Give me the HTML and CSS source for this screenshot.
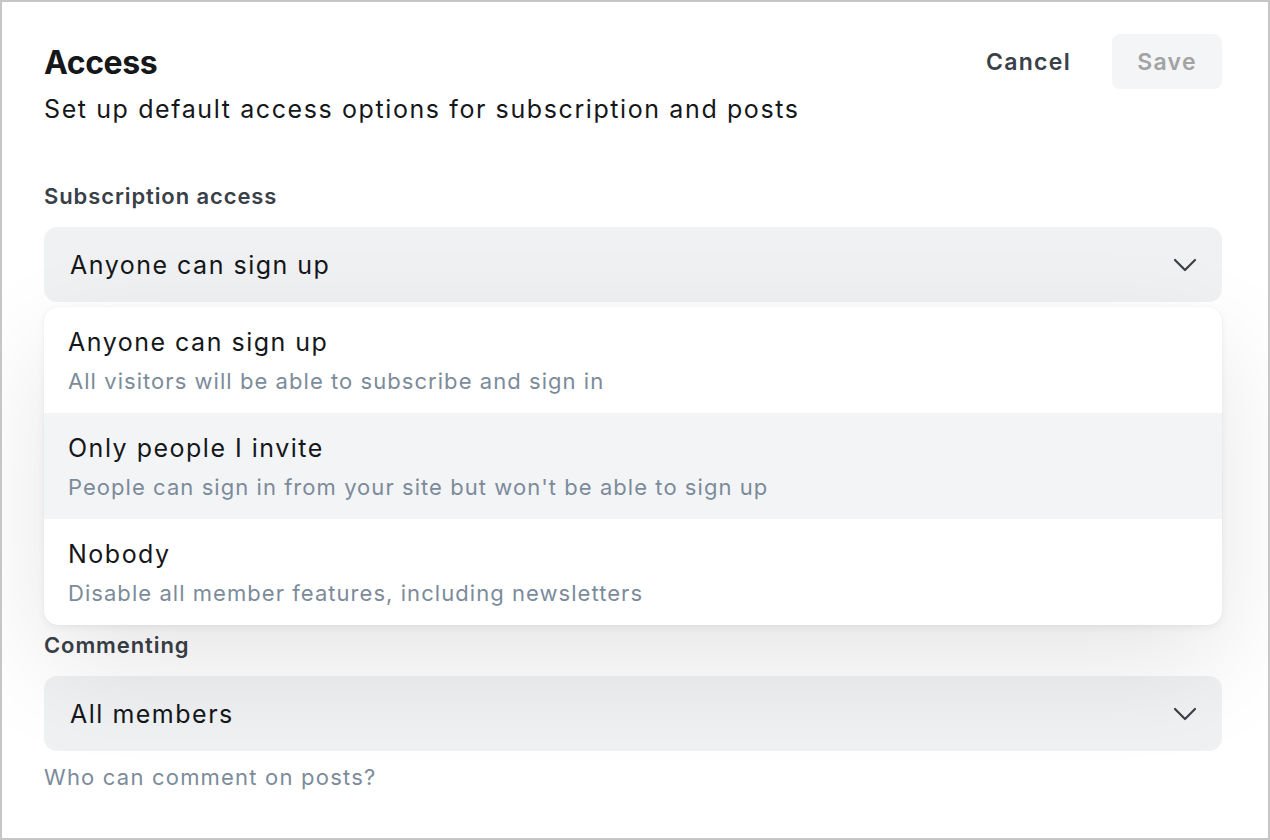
FILE: index.html
```html
<!DOCTYPE html>
<html lang="en">
<head>
    <meta charset="UTF-8">
    <meta name="viewport" content="width=device-width, initial-scale=1.0">
    <title>Access settings</title>
    <link rel="stylesheet" href="styles.css">
</head>
<body>
    <div class="modal">
        <header class="modal-header">
            <div class="heading">
                <h1>Access</h1>
                <p>Set up default access options for subscription and posts</p>
            </div>
            <div class="actions">
                <button class="btn-cancel">Cancel</button>
                <button class="btn-save" disabled>Save</button>
            </div>
        </header>

        <div class="fields">
            <div class="field">
                <label>Subscription access</label>
                <div class="select">
                    <span>Anyone can sign up</span>
                    <svg class="chevron" width="24" height="14" viewBox="0 0 24 14"><path d="M2 2l10 10L22 2" fill="none" stroke="#394047" stroke-width="2.2" stroke-linecap="round" stroke-linejoin="round"/></svg>
                </div>
                <!-- open menu -->
                <ul class="menu">
                    <li>
                        <div class="opt-title">Anyone can sign up</div>
                        <div class="opt-desc">All visitors will be able to subscribe and sign in</div>
                    </li>
                    <li class="active">
                        <div class="opt-title">Only people I invite</div>
                        <div class="opt-desc">People can sign in from your site but won't be able to sign up</div>
                    </li>
                    <li>
                        <div class="opt-title">Nobody</div>
                        <div class="opt-desc">Disable all member features, including newsletters</div>
                    </li>
                </ul>
            </div>

            <div class="field">
                <label>Commenting</label>
                <div class="select">
                    <span>All members</span>
                    <svg class="chevron" width="24" height="14" viewBox="0 0 24 14"><path d="M2 2l10 10L22 2" fill="none" stroke="#394047" stroke-width="2.2" stroke-linecap="round" stroke-linejoin="round"/></svg>
                </div>
                <div class="hint">Who can comment on posts?</div>
            </div>
        </div>
    </div>
</body>
</html>
```

FILE: styles.css
```css
* {
    box-sizing: border-box;
}
body {
    margin: 0;
    font-family: Inter, "Noto Sans", sans-serif;
    color: #15171a;
    background: #fff;
}
.modal {
    height: 840px;
    border: 2px solid #c6c6c6;
    padding: 32px 46px 0 42px;
    overflow: hidden;
}
.modal-header {
    display: flex;
    justify-content: space-between;
    align-items: flex-start;
}
.heading {
    padding-top: 9px;
}
.heading h1 {
    margin: 0;
    font-size: 32px;
    line-height: 40px;
    font-weight: 700;
    letter-spacing: -0.4px;
}
.heading p {
    margin: 9px 0 0;
    font-size: 25px;
    line-height: 34px;
    letter-spacing: 1.6px;
}
.actions {
    display: flex;
    gap: 21px;
}
.actions button {
    font-family: inherit;
    font-size: 23px;
    font-weight: 600;
    letter-spacing: 1.3px;
    height: 55px;
    border: none;
    border-radius: 8px;
    cursor: pointer;
}
.btn-cancel {
    background: none;
    color: #394047;
    padding: 0 20px;
}
.btn-save {
    background: #f4f5f6;
    color: #a3a3a3;
    width: 110px;
}
.fields {
    margin-top: 56px;
    display: flex;
    flex-direction: column;
    gap: 6px;
}
.field label {
    display: block;
    font-size: 22px;
    line-height: 28px;
    font-weight: 600;
    letter-spacing: 0.9px;
    color: #394047;
    margin-bottom: 17px;
}
.select {
    display: flex;
    align-items: center;
    justify-content: space-between;
    height: 75px;
    padding: 0 25px 0 26px;
    background: #eff1f3;
    border-radius: 13px;
    font-size: 25px;
    letter-spacing: 1.5px;
}
.chevron {
    flex-shrink: 0;
}
.hint {
    margin-top: 12px;
    font-size: 22px;
    line-height: 28px;
    letter-spacing: 1.2px;
    color: #7c8b9a;
}
.menu {
    position: relative;
    z-index: 2;
    list-style: none;
    margin: 5px 0 0;
    padding: 0;
    background: #fff;
    border-radius: 14px;
    overflow: hidden;
    box-shadow: 0 0 1px rgba(0, 0, 0, 0.12), 0 3px 8px rgba(0, 0, 0, 0.05), 0 40px 110px rgba(0, 0, 0, 0.1);
}
.menu li {
    height: 106px;
    padding: 18px 24px;
}
.menu li.active {
    background: #f3f4f6;
}
.opt-title {
    font-size: 25px;
    line-height: 34px;
    letter-spacing: 1.5px;
}
.opt-desc {
    margin-top: 8px;
    font-size: 22px;
    line-height: 28px;
    letter-spacing: 1.05px;
    color: #7c8b9a;
}
```
